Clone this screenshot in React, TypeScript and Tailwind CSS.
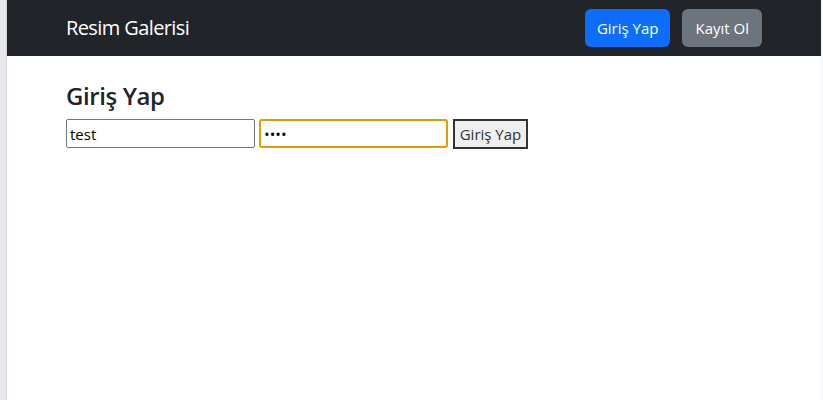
import React from 'react';

const App: React.FC = () => {
  return (
    <div className="flex min-h-[400px] w-full bg-white font-['Open_Sans',sans-serif] text-[#212529]">
      <div className="w-[7px] shrink-0 border-r border-[#d4d4d8] bg-[#e8e8ec]" />
      <div className="flex-1">
        <nav className="h-[56px] bg-[#212529]">
          <div className="flex h-full items-center justify-between px-[59px]">
            <span className="text-[20px] text-white tracking-[-0.6px]">Resim Galerisi</span>
            <div className="flex gap-3">
              <button className="h-[38px] rounded-md bg-[#0d6efd] px-3 text-[15px] text-white">Giriş Yap</button>
              <button className="h-[38px] rounded-md bg-[#6c757d] px-[13px] text-[15px] text-white">Kayıt Ol</button>
            </div>
          </div>
        </nav>
        <main className="px-[59px] pt-[26px]">
          <h3 className="mb-[8px] text-[24px] font-semibold leading-[1.2] tracking-[-0.4px]">Giriş Yap</h3>
          <form className="flex items-center gap-[4px]">
            <input
              type="text"
              defaultValue="test"
              className="h-[29px] w-[189px] rounded-[2px] border border-[#767676] px-[3px] text-[15px] text-black outline-none"
            />
            <input
              type="password"
              defaultValue="1234"
              className="h-[29px] w-[189px] rounded-[3px] border-2 border-[#e59c00] px-[3px] text-[15px] text-black outline-none"
            />
            <button
              type="button"
              className="ml-[1px] h-[30px] w-[75px] border-2 border-[#333] bg-[#efefef] text-[15px] text-[#333]"
            >
              Giriş Yap
            </button>
          </form>
        </main>
      </div>
      <div className="w-[2px] shrink-0 bg-[#f4f5f8]" />
    </div>
  );
};

export default App;
